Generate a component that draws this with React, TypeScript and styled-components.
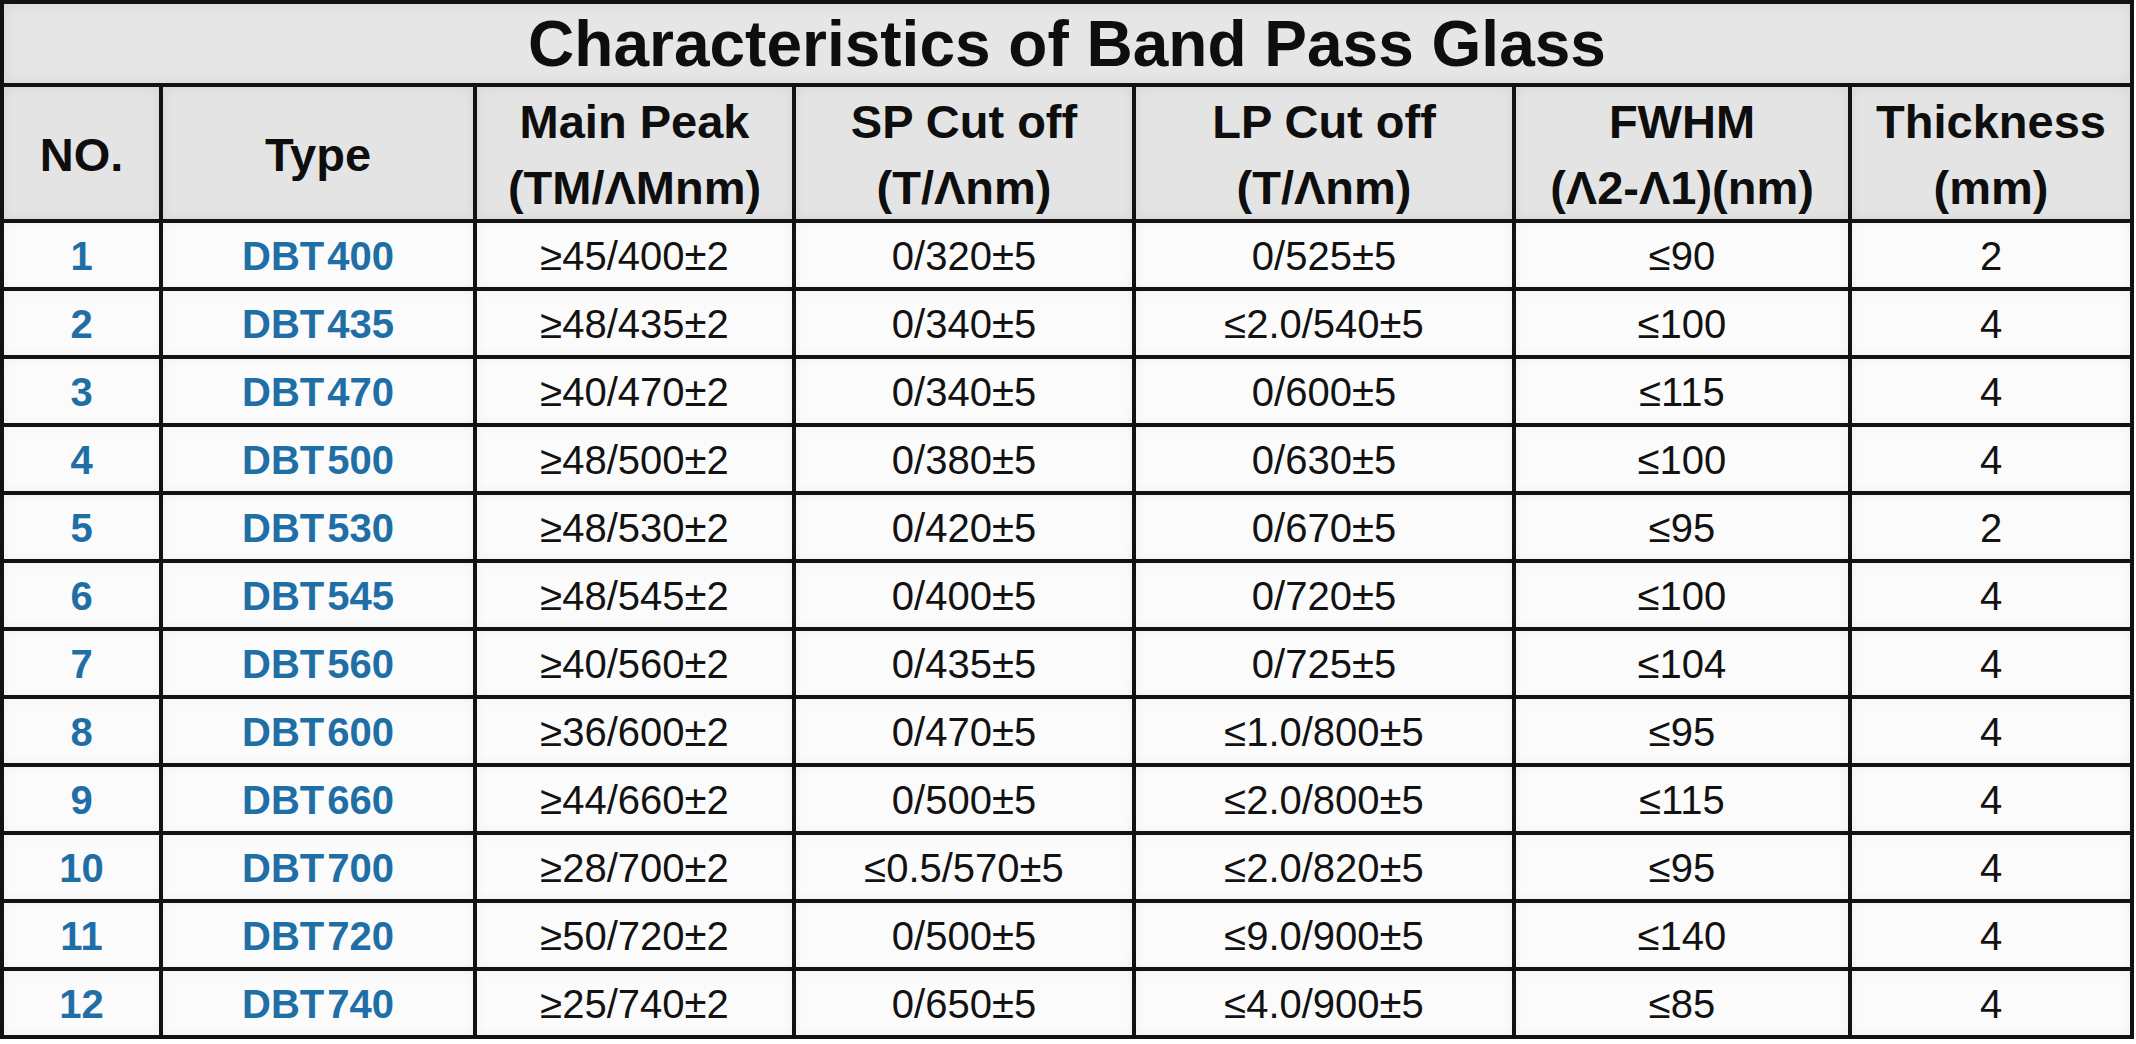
import React from 'react';
import styled, { createGlobalStyle } from 'styled-components';

const GlobalStyle = createGlobalStyle`
    html, body {
        margin: 0;
        padding: 0;
        background: #ffffff;
    }
    body {
        font-family: "Liberation Sans", Arial, sans-serif;
    }
`;

const Page = styled.div`
    width: 2136px;
    height: 1044px;
    background: #ffffff;
`;

const Table = styled.div`
    width: 2134px;
    display: grid;
    grid-template-columns: 155px 310px 315px 336px 376px 332px 278px;
    grid-template-rows: 79px 132px repeat(12, 64px);
    gap: 4px;
    padding: 4px;
    box-sizing: border-box;
    background: #121212;
`;

const TitleCell = styled.div`
    grid-column: 1 / -1;
    display: flex;
    align-items: center;
    justify-content: center;
    background: #e6e6e6;
    box-shadow: inset 0 0 14px rgba(0, 0, 0, 0.07);
    font-size: 64px;
    font-weight: 700;
    color: #0e0e0e;
`;

const HeadCell = styled.div`
    display: flex;
    flex-direction: column;
    align-items: center;
    justify-content: center;
    background: #e4e4e4;
    box-shadow: inset 0 0 12px rgba(0, 0, 0, 0.07);
    font-size: 47px;
    font-weight: 700;
    line-height: 66px;
    color: #0e0e0e;
    padding-top: 4px;
    box-sizing: border-box;
    white-space: nowrap;
`;

const DataCell = styled.div<{ $accent?: boolean }>`
    display: flex;
    align-items: center;
    justify-content: center;
    background: #fbfbfb;
    box-shadow: inset 0 0 10px rgba(0, 0, 0, 0.05);
    font-size: 40px;
    font-weight: ${({ $accent }) => ($accent ? 700 : 400)};
    color: ${({ $accent }) => ($accent ? '#1f6fa6' : '#121212')};
    white-space: nowrap;
    padding-top: 3px;
    box-sizing: border-box;
`;

const Digits = styled.span`
    margin-left: 3px;
`;

const headers: string[][] = [
    ['NO.'],
    ['Type'],
    ['Main Peak', '(TM/ΛMnm)'],
    ['SP Cut off', '(T/Λnm)'],
    ['LP Cut off', '(T/Λnm)'],
    ['FWHM', '(Λ2-Λ1)(nm)'],
    ['Thickness', '(mm)'],
];

const rows = [
    ['400', '≥45/400±2', '0/320±5', '0/525±5', '≤90', '2'],
    ['435', '≥48/435±2', '0/340±5', '≤2.0/540±5', '≤100', '4'],
    ['470', '≥40/470±2', '0/340±5', '0/600±5', '≤115', '4'],
    ['500', '≥48/500±2', '0/380±5', '0/630±5', '≤100', '4'],
    ['530', '≥48/530±2', '0/420±5', '0/670±5', '≤95', '2'],
    ['545', '≥48/545±2', '0/400±5', '0/720±5', '≤100', '4'],
    ['560', '≥40/560±2', '0/435±5', '0/725±5', '≤104', '4'],
    ['600', '≥36/600±2', '0/470±5', '≤1.0/800±5', '≤95', '4'],
    ['660', '≥44/660±2', '0/500±5', '≤2.0/800±5', '≤115', '4'],
    ['700', '≥28/700±2', '≤0.5/570±5', '≤2.0/820±5', '≤95', '4'],
    ['720', '≥50/720±2', '0/500±5', '≤9.0/900±5', '≤140', '4'],
    ['740', '≥25/740±2', '0/650±5', '≤4.0/900±5', '≤85', '4'],
];

const App: React.FC = () => {
    return (
        <Page>
            <GlobalStyle />
            <Table>
                <TitleCell>Characteristics of Band Pass Glass</TitleCell>
                {headers.map((lines, i) => (
                    <HeadCell key={`h${i}`}>
                        {lines.map((line, j) => (
                            <span key={j}>{line}</span>
                        ))}
                    </HeadCell>
                ))}
                {rows.map((row, i) => (
                    <React.Fragment key={`r${i}`}>
                        <DataCell $accent>{i + 1}</DataCell>
                        <DataCell $accent>
                            DBT<Digits>{row[0]}</Digits>
                        </DataCell>
                        {row.slice(1).map((value, j) => (
                            <DataCell key={j}>{value}</DataCell>
                        ))}
                    </React.Fragment>
                ))}
            </Table>
        </Page>
    );
};

export default App;
